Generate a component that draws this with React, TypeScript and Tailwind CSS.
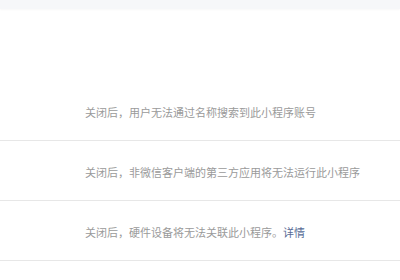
export default function App() {
  const rows = [
    { text: "关闭后，用户无法通过名称搜索到此小程序账号" },
    { text: "关闭后，非微信客户端的第三方应用将无法运行此小程序" },
    { text: "关闭后，硬件设备将无法关联此小程序。", link: "详情" },
  ];
  return (
    <div
      className="w-[400px] h-[280px] bg-white overflow-hidden"
      style={{ fontFamily: '"Noto Sans CJK SC", "Noto Sans", sans-serif' }}
    >
      <div className="h-[9px] bg-[#f6f7f9] shadow-[0_1px_2px_rgba(0,0,0,0.03)]" />
      <div className="h-[72px]" />
      {rows.map((r, i) => (
        <div
          key={i}
          className="h-[60px] border-b border-[#e7e7e7] flex items-center pl-[85px] pt-[3px]"
        >
          <span className="text-[11px] leading-none text-[#9a9a9a] whitespace-nowrap">
            {r.text}
            {r.link && <span className="text-[#576b95]">{r.link}</span>}
          </span>
        </div>
      ))}
    </div>
  );
}
